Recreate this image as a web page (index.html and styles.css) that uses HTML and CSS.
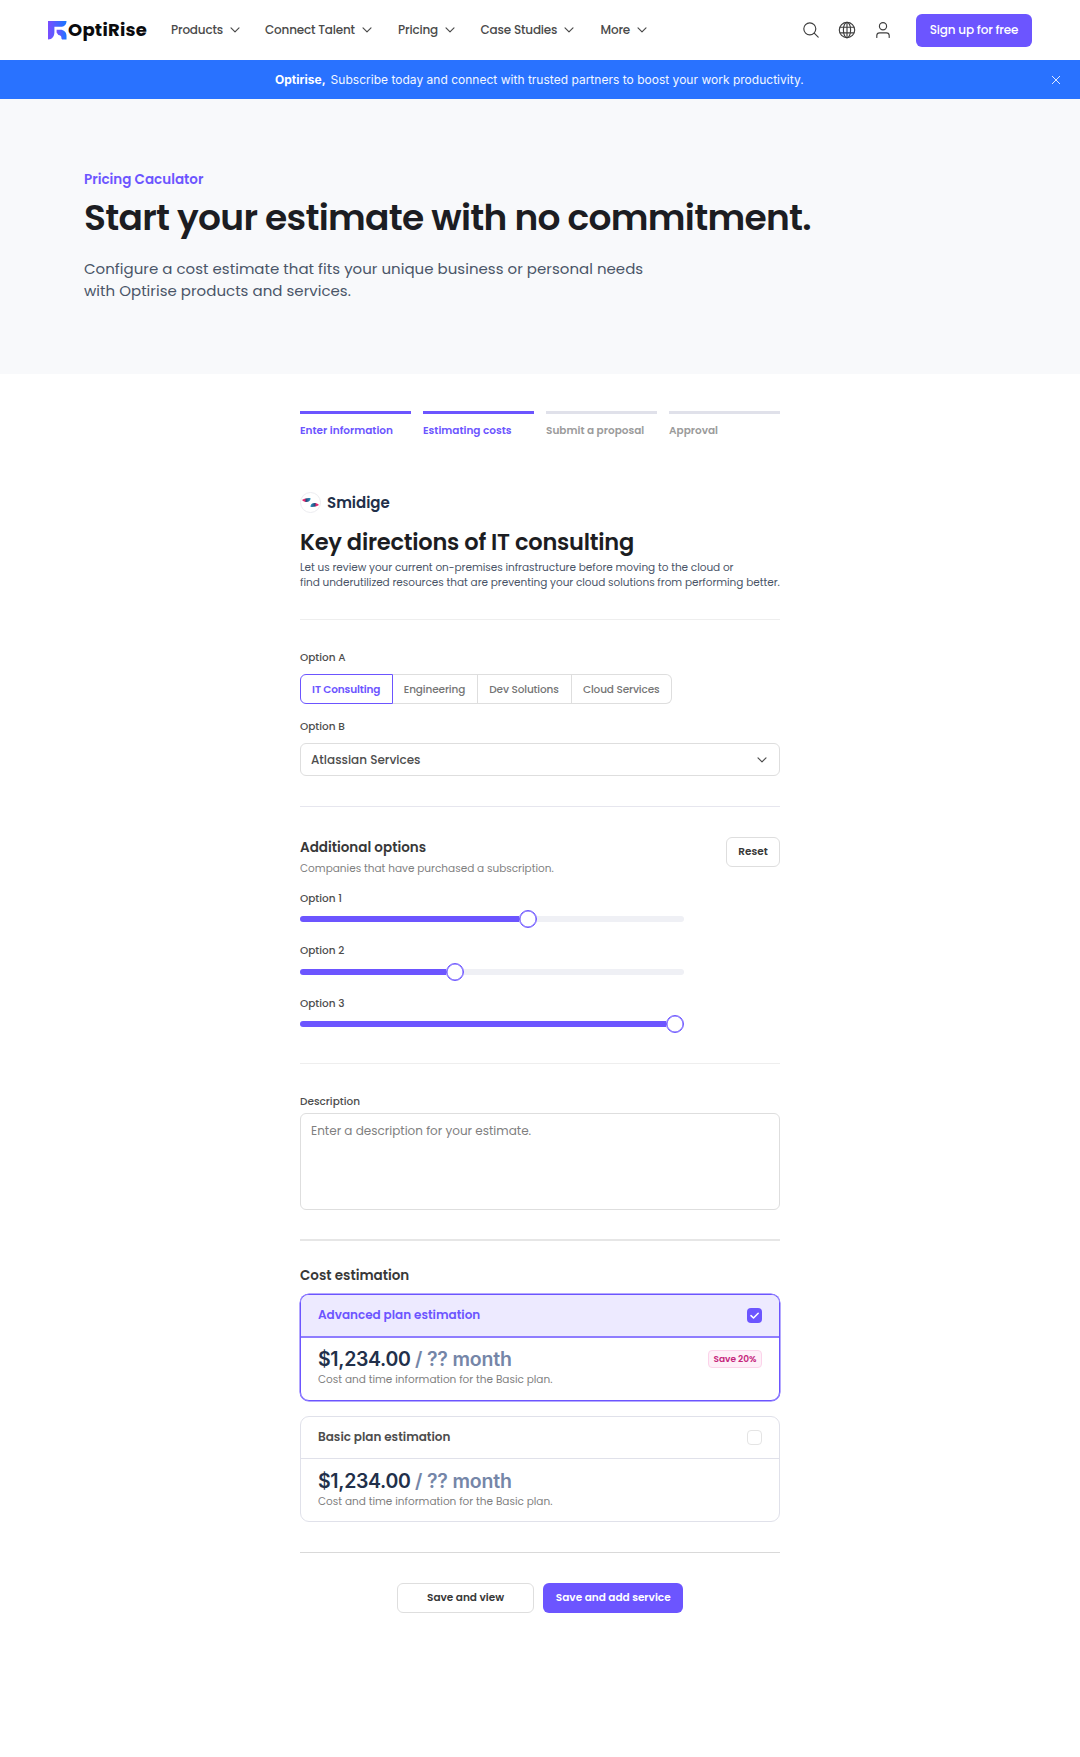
FILE: index.html
```
<!DOCTYPE html>
<html lang="en">
<head>
<meta charset="utf-8">
<title>OptiRise – Pricing</title>
<link rel="stylesheet" href="styles.css">
</head>
<body>
<svg width="0" height="0" class="defs" aria-hidden="true">
  <symbol id="chev" viewBox="0 0 10 6"><path d="M1 .9 5 4.9 9 .9" fill="none" stroke="currentColor" stroke-width="1.15" stroke-linecap="round" stroke-linejoin="round"/></symbol>
</svg>

<header class="topbar">
  <a class="logo">
    <svg width="19" height="19" viewBox="0 0 19 19">
      <defs><linearGradient id="lg" x1="0" y1="0" x2="1" y2="0"><stop offset="0" stop-color="#7a4dff"/><stop offset="1" stop-color="#1877ff"/></linearGradient></defs>
      <path fill="url(#lg)" d="M0 0H18.5C18.5 3.6 16.2 5.8 12.6 5.8H6.4V11C6.4 15.5 4.4 18.2 0 18.6Z"/>
      <path fill="url(#lg)" d="M8.6 8.8H12.2C16 8.8 18.5 11.2 18.5 14.8V18.6H15C13.6 18.6 13.4 17.8 13.4 16.8C13.4 14.6 12 14.2 10.4 14L8.6 11.6Z"/>
    </svg>
    <span>OptiRise</span>
  </a>
  <nav class="nav">
    <a>Products<svg><use href="#chev"/></svg></a>
    <a>Connect Talent<svg><use href="#chev"/></svg></a>
    <a>Pricing<svg><use href="#chev"/></svg></a>
    <a>Case Studies<svg><use href="#chev"/></svg></a>
    <a>More<svg><use href="#chev"/></svg></a>
  </nav>
  <div class="tools">
    <svg width="18" height="18" viewBox="0 0 18 18"><circle cx="7.8" cy="7.8" r="6"/><path d="M12.2 12.2 16.2 16.2"/></svg>
    <svg width="18" height="18" viewBox="0 0 18 18"><circle cx="9" cy="9" r="7.7"/><ellipse cx="9" cy="9" rx="3.6" ry="7.7"/><path d="M2.2 6.2H15.8M2.2 11.8H15.8M9 1.3V16.7"/></svg>
    <svg width="18" height="18" viewBox="0 0 18 18"><circle cx="9" cy="5.2" r="3.6"/><path d="M2.8 16.4V14.6C2.8 12.8 4 11.8 5.6 11.8H12.4C14 11.8 15.2 12.8 15.2 14.6V16.4"/></svg>
  </div>
  <button class="signup">Sign up for free</button>
</header>

<div class="banner">
  <p><b>Optirise,</b> Subscribe today and connect with trusted partners to boost your work productivity.</p>
  <svg class="close" width="10" height="10" viewBox="0 0 10 10"><path d="M1 1 9 9M9 1 1 9"/></svg>
</div>

<section class="hero">
  <p class="eyebrow">Pricing Caculator</p>
  <h1>Start your estimate with no commitment.</h1>
  <p class="lead">Configure a cost estimate that fits your unique business or personal needs<br>with Optirise products and services.</p>
</section>

<main class="form">
  <ol class="steps">
    <li class="done">Enter information</li>
    <li class="done">Estimating costs</li>
    <li>Submit a proposal</li>
    <li>Approval</li>
  </ol>

  <div class="vendor">
    <svg width="21" height="21" viewBox="0 0 21 21">
      <defs>
        <linearGradient id="va"><stop offset=".3" stop-color="#e4286e"/><stop offset=".5" stop-color="#274b7c"/><stop offset="1" stop-color="#2b9ac4"/></linearGradient>
        <linearGradient id="vb"><stop offset="0" stop-color="#2b9ac4"/><stop offset=".5" stop-color="#274b7c"/><stop offset=".7" stop-color="#e4286e"/></linearGradient>
      </defs>
      <circle cx="10.5" cy="10.5" r="10" fill="#fff" stroke="#ececf0"/>
      <path fill="url(#va)" d="M2 8C4 6.6 8 5.6 10.6 6.2C10.6 8.6 9 10 6.4 10C5 10 3.4 9.4 2 8Z"/>
      <path fill="url(#vb)" d="M19 13C17 14.4 13 15.4 10.4 14.8C10.4 12.4 12 11 14.6 11C16 11 17.6 11.6 19 13Z"/>
    </svg>
    <span>Smidige</span>
  </div>
  <h2>Key directions of IT consulting</h2>
  <p class="intro">Let us review your current on-premises infrastructure before moving to the cloud or<br>find underutilized resources that are preventing your cloud solutions from performing better.</p>

  <section class="block choices">
    <p class="label">Option A</p>
    <div class="tabs">
      <span class="active">IT Consulting</span><span>Engineering</span><span>Dev Solutions</span><span>Cloud Services</span>
    </div>
    <p class="label">Option B</p>
    <div class="select">Atlassian Services<svg><use href="#chev"/></svg></div>
  </section>

  <section class="block extras">
    <div class="extras-head">
      <div>
        <h3>Additional options</h3>
        <p class="sub">Companies that have purchased a subscription.</p>
      </div>
      <button class="btn reset">Reset</button>
    </div>
    <div class="sliders">
      <div><p class="label">Option 1</p><div class="slider"><i class="fill" style="width:219px"></i><i class="thumb"></i><i class="rest"></i></div></div>
      <div><p class="label">Option 2</p><div class="slider"><i class="fill" style="width:145.5px"></i><i class="thumb"></i><i class="rest"></i></div></div>
      <div><p class="label">Option 3</p><div class="slider"><i class="fill" style="width:366px"></i><i class="thumb"></i></div></div>
    </div>
  </section>

  <section class="block describe">
    <p class="label">Description</p>
    <div class="textarea">Enter a description for your estimate.</div>
  </section>

  <section class="block costs">
    <h3>Cost estimation</h3>
    <article class="plan selected">
      <header><h4>Advanced plan estimation</h4><span class="check"><svg width="15" height="15" viewBox="0 0 15 15"><path d="M4 7.6 6.5 10 11.2 5.2"/></svg></span></header>
      <div class="plan-body">
        <div>
          <p class="price">$1,234.00 <span>/ ?? month</span></p>
          <p class="sub">Cost and time information for the Basic plan.</p>
        </div>
        <span class="badge">Save 20%</span>
      </div>
    </article>
    <article class="plan">
      <header><h4>Basic plan estimation</h4><span class="check"></span></header>
      <div class="plan-body">
        <div>
          <p class="price">$1,234.00 <span>/ ?? month</span></p>
          <p class="sub">Cost and time information for the Basic plan.</p>
        </div>
      </div>
    </article>
  </section>

  <footer class="block actions">
    <button class="btn view">Save and view</button>
    <button class="btn primary">Save and add service</button>
  </footer>
</main>
</body>
</html>
```
FILE: styles.css
```
* { box-sizing: border-box; }
body, h1, h2, h3, h4, p, ol { margin: 0; padding: 0; }
body {
  min-height: 1757px;
  background: #fff;
  color: #4d4d4d;
  font-family: Poppins, Inter, sans-serif;
  font-size: 10.5px;
  line-height: 16px;
  white-space: nowrap;
}
ol { list-style: none; }
button { font-family: inherit; white-space: nowrap; padding: 0; }
svg { display: block; flex: none; }
.defs { position: absolute; }

.topbar { height: 60px; display: flex; align-items: center; padding: 0 48px; }
.logo {
  display: flex; align-items: center; gap: 1px; width: 123px;
  color: #0b0b0d; font-size: 18px; font-weight: 700; letter-spacing: .25px; line-height: 24px;
}
.logo span { margin-top: -1px; }
.nav {
  display: grid; grid-template-columns: 94px 133px 82.5px 120px auto;
  font-size: 12px; font-weight: 500; color: #4a4a4a; letter-spacing: -.18px;
}
.nav a { display: flex; align-items: center; gap: 7px; }
.nav svg { width: 10px; height: 6px; }
.tools { display: flex; gap: 18px; margin-left: auto; }
.tools svg { fill: none; stroke: #3f3f3f; stroke-width: 1.15; stroke-linecap: round; stroke-linejoin: round; }
.signup {
  width: 116px; height: 33px; margin-left: 24px; border: 0; border-radius: 6px;
  background: #6c55ff; color: #fff; font-size: 12px; font-weight: 500; letter-spacing: -.18px;
}

.banner {
  height: 39px; display: flex; align-items: center; justify-content: space-between;
  padding: 0 19px 0 275px; background: #2972ff; color: #f3f7ff;
  font: 400 12px/18px Inter, sans-serif; letter-spacing: .016px;
}
.banner b { font-weight: 700; color: #fff; margin-right: 1.5px; }
.close { stroke: #dfe9ff; stroke-width: 1; }

.hero { height: 275px; padding: 72px 84px 0; background: #f8f9fb; }
.eyebrow { color: #6c55ff; font-size: 13.5px; line-height: 18px; font-weight: 600; }
h1 { margin-top: 5.5px; color: #1c1d22; font-size: 36px; line-height: 45px; font-weight: 600; letter-spacing: -.02em; }
.lead { margin-top: 18px; color: #4a5568; font-size: 15px; line-height: 22.5px; letter-spacing: .02px; }

.form { width: 480px; margin: 0 auto; padding-top: 37px; }
.steps { display: grid; grid-template-columns: repeat(4, 1fr); gap: 12px; }
.steps li { height: 27px; border-top: 3px solid #e0e1ea; padding-top: 9px; color: #9b9b9b; font-weight: 600; }
.steps .done { border-color: #6c55ff; color: #6c55ff; }

.vendor {
  display: flex; align-items: center; gap: 6px; height: 21px; margin-top: 54px;
  color: #22304a; font-size: 15px; font-weight: 600;
}
h2 { margin-top: 14px; color: #1c1d22; font-size: 22.5px; line-height: 30px; font-weight: 600; letter-spacing: -.01em; }
.intro { margin: 3px 0 29px; color: #4a5568; line-height: 15px; letter-spacing: -.035px; }

.block { border-top: 1px solid #eee; }
.label { font-weight: 500; }
.sub { color: #7f7f7f; }
h3 { color: #383838; font-size: 13.5px; line-height: 20px; font-weight: 600; }

.choices { padding: 30px 0; }
.tabs { display: flex; margin: 8px 0 15px; }
.tabs span {
  height: 30px; width: 100.5px; border: 1px solid #dedede; border-left: 0;
  text-align: center; line-height: 29.5px; font-weight: 500; color: #757575; letter-spacing: -.12px;
}
.tabs span:nth-child(2) { width: 85px; }
.tabs span:nth-child(3) { width: 94px; }
.tabs span:last-child { border-radius: 0 6px 6px 0; }
.tabs .active { width: 92.5px; border: 1px solid #6c55ff; border-radius: 6px 0 0 6px; color: #6c55ff; font-weight: 600; }
.select {
  height: 33px; margin-top: 8px; padding: 0 12px 0 10px; border: 1px solid #dedede; border-radius: 6px;
  display: flex; align-items: center; justify-content: space-between;
  font-size: 12px; font-weight: 500;
}
.select svg { width: 10px; height: 6px; }

.extras { padding: 30px 0; border-color: #e6e6ee; }
.extras-head { display: flex; justify-content: space-between; height: 53.5px; }
.extras-head h3 { padding-top: 1px; }
.extras-head .sub { margin-top: 3px; }
.btn {
  height: 30px; border: 1px solid #dedede; border-radius: 6px; background: #fff;
  color: #383838; font-size: 10.5px; font-weight: 600;
}
.reset { width: 54px; }
.sliders { display: grid; gap: 15px; width: 384px; }
.slider { display: flex; align-items: center; height: 18px; margin-top: 3.5px; }
.fill { height: 6px; border-radius: 3px 0 0 3px; background: #6c55ff; }
.thumb { width: 18px; height: 18px; flex: none; border: 1px solid #6c55ff; box-shadow: inset 0 0 0 .5px #6c55ff; border-radius: 50%; background: #fff; }
.rest { height: 6px; flex: 1; border-radius: 0 3px 3px 0; background: #eff0f5; }

.describe { padding: 30px 0 29.5px; }
.textarea {
  height: 96.5px; margin-top: 3px; padding: 8.5px 10px; border: 1px solid #dedede; border-radius: 6px;
  color: #7f7f7f; font-size: 12px;
}

.costs { padding: 24px 0 30px; border-top: 2px solid #e6e6e6; }
.costs h3 { padding-top: .5px; }
.plan { height: 106px; margin-top: 15px; border: 1px solid #e0e1ea; border-radius: 9px; overflow: hidden; }
.plan header {
  height: 42px; padding: 0 17px; border-bottom: 1px solid #e0e1ea;
  display: flex; align-items: center; justify-content: space-between;
}
.plan h4 { font-size: 12px; font-weight: 600; color: #4d4d4d; }
.check { width: 15px; height: 15px; border: 1px solid #e4e4e4; border-radius: 4px; }
.plan-body { display: flex; justify-content: space-between; padding: 10px 17px 0; }
.plan .sub { margin-top: 1px; }
.price { font: 600 19.5px/24px Inter, sans-serif; letter-spacing: -.33px; color: #22304a; }
.price span { color: #7586a8; letter-spacing: -.2px; }
.selected { height: 106.5px; margin-top: 8.5px; border-color: #6c55ff; box-shadow: 0 0 0 .5px #6c55ff; }
.selected header { background: #edeaff; height: 42.5px; border-bottom: 2px solid #8f7dff; }
.selected h4 { color: #6c55ff; }
.selected .check { border: 0; background: #6c55ff; }
.selected .plan-body { padding-top: 9.5px; }
.check svg { fill: none; stroke: #fff; stroke-width: 1.5; stroke-linecap: round; stroke-linejoin: round; }
.badge {
  width: 54px; height: 18px; margin-top: 3px; border: 1px solid #fcd3ea; border-radius: 4px;
  background: #fef0f8; color: #c5267c; font-size: 9px; line-height: 16.5px; font-weight: 600;
  text-align: center;
}

.actions { display: flex; justify-content: center; gap: 9px; padding-top: 30px; border-color: #d9d9d9; }
.view { width: 137.5px; }
.primary { width: 140px; border: 0; background: #6c55ff; color: #fff; }
```
